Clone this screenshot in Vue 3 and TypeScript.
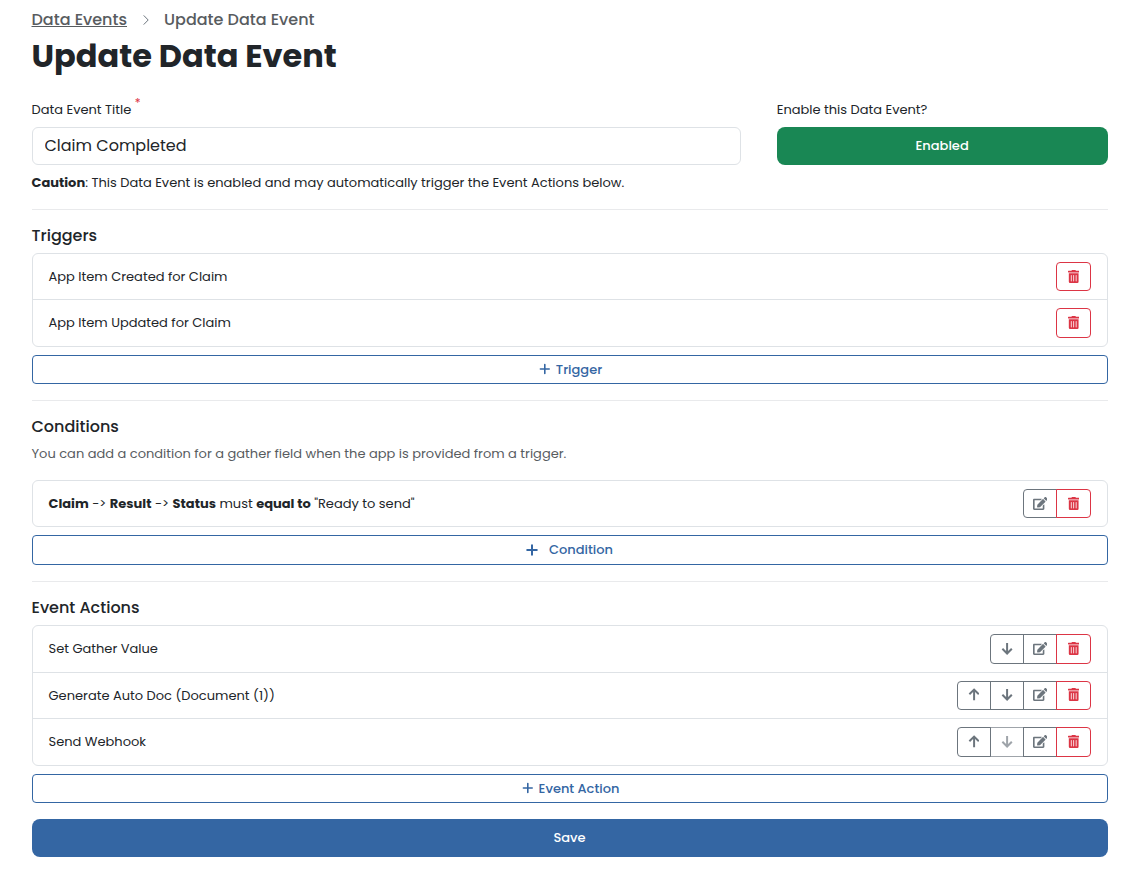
<script setup lang="ts">
import { ref } from 'vue'

type IconName = 'trash' | 'edit' | 'up' | 'down'

interface RowButton {
  icon: IconName
  label: string
  disabled?: boolean
}

interface Row {
  text: string
  buttons: RowButton[]
}

const title = ref('Claim Completed')

const up: RowButton = { icon: 'up', label: 'Move up' }
const down: RowButton = { icon: 'down', label: 'Move down' }
const edit: RowButton = { icon: 'edit', label: 'Edit' }
const trash: RowButton = { icon: 'trash', label: 'Delete' }

const icons: Record<IconName, { box: string; path: string }> = {
  trash: {
    box: '0 0 448 512',
    path: 'M32 464a48 48 0 0 0 48 48h288a48 48 0 0 0 48-48V128H32zm272-256a16 16 0 0 1 32 0v224a16 16 0 0 1-32 0zm-96 0a16 16 0 0 1 32 0v224a16 16 0 0 1-32 0zm-96 0a16 16 0 0 1 32 0v224a16 16 0 0 1-32 0zM432 32H312l-9.4-18.7A24 24 0 0 0 281.1 0H166.8a23.72 23.72 0 0 0-21.4 13.3L136 32H16A16 16 0 0 0 0 48v32a16 16 0 0 0 16 16h416a16 16 0 0 0 16-16V48a16 16 0 0 0-16-16z',
  },
  edit: {
    box: '0 0 576 512',
    path: 'M402.6 83.2l90.2 90.2c3.8 3.8 3.8 10 0 13.8L274.4 405.6l-92.8 10.3c-12.4 1.4-22.9-9.1-21.5-21.5l10.3-92.8L388.8 83.2c3.8-3.8 10-3.8 13.8 0zm162-22.9l-48.8-48.8c-15.2-15.2-39.9-15.2-55.2 0l-35.4 35.4c-3.8 3.8-3.8 10 0 13.8l90.2 90.2c3.8 3.8 10 3.8 13.8 0l35.4-35.4c15.2-15.3 15.2-40 0-55.2zM384 346.2V448H64V128h229.8c3.2 0 6.2-1.3 8.5-3.5l40-40c7.6-7.6 2.2-20.5-8.5-20.5H48C21.5 64 0 85.5 0 112v352c0 26.5 21.5 48 48 48h352c26.5 0 48-21.5 48-48V306.2c0-10.7-12.9-16-20.5-8.5l-40 40c-2.2 2.3-3.5 5.3-3.5 8.5z',
  },
  up: { box: '0 0 448 512', path: 'M240 480V64M54 248L240 62l186 186' },
  down: { box: '0 0 448 512', path: 'M240 36v414M54 268l186 186 186-186' },
}

const triggers: Row[] = [
  { text: 'App Item Created for Claim', buttons: [trash] },
  { text: 'App Item Updated for Claim', buttons: [trash] },
]

const conditionButtons: RowButton[] = [edit, trash]

const actions: Row[] = [
  { text: 'Set Gather Value', buttons: [down, edit, trash] },
  { text: 'Generate Auto Doc (Document (1))', buttons: [up, down, edit, trash] },
  { text: 'Send Webhook', buttons: [up, { ...down, disabled: true }, edit, trash] },
]
</script>

<template>
  <main class="page">
    <nav class="crumbs">
      <a href="#">Data Events</a>
      <svg class="chevron" viewBox="0 0 6 10"><path d="M.7.4L5.2 5 .7 9.6" /></svg>
      <span>Update Data Event</span>
    </nav>
    <h1>Update Data Event</h1>

    <div class="fields">
      <div>
        <label for="event-title">Data Event Title <sup>*</sup></label>
        <input id="event-title" v-model="title" type="text" />
      </div>
      <div>
        <label>Enable this Data Event?</label>
        <button class="solid success" type="button">Enabled</button>
      </div>
    </div>
    <p class="caution"><b>Caution</b>: This Data Event is enabled and may automatically trigger the Event Actions below.</p>

    <hr />

    <section>
      <h2>Triggers</h2>
      <ul class="list">
        <li v-for="row in triggers" :key="row.text">
          <span>{{ row.text }}</span>
          <div class="group">
            <button v-for="b in row.buttons" :key="b.icon" type="button" :class="['tool', b.icon]" :aria-label="b.label">
              <svg :viewBox="icons[b.icon].box"><path :d="icons[b.icon].path" /></svg>
            </button>
          </div>
        </li>
      </ul>
      <button class="add" type="button">
        <svg class="plus" viewBox="0 0 16 12"><path d="M7.8 1.6v8.8M3.4 6h8.8" /></svg>
        Trigger
      </button>
    </section>

    <hr />

    <section>
      <h2>Conditions</h2>
      <p class="hint">You can add a condition for a gather field when the app is provided from a trigger.</p>
      <ul class="list">
        <li>
          <span><b>Claim</b> -&gt; <b>Result</b> -&gt; <b>Status</b> must <b>equal to</b> "Ready to send"</span>
          <div class="group">
            <button v-for="b in conditionButtons" :key="b.icon" type="button" :class="['tool', b.icon]" :aria-label="b.label">
              <svg :viewBox="icons[b.icon].box"><path :d="icons[b.icon].path" /></svg>
            </button>
          </div>
        </li>
      </ul>
      <button class="add roomy" type="button">
        <svg class="plus" viewBox="0 0 12 12"><path d="M6 1.2v9.6M1.2 6h9.6" /></svg>
        Condition
      </button>
    </section>

    <hr />

    <section>
      <h2>Event Actions</h2>
      <ul class="list">
        <li v-for="row in actions" :key="row.text">
          <span>{{ row.text }}</span>
          <div class="group">
            <button
              v-for="b in row.buttons"
              :key="b.icon"
              type="button"
              :class="['tool', b.icon]"
              :aria-label="b.label"
              :disabled="b.disabled"
            >
              <svg :viewBox="icons[b.icon].box"><path :d="icons[b.icon].path" /></svg>
            </button>
          </div>
        </li>
      </ul>
      <button class="add" type="button">
        <svg class="plus" viewBox="0 0 16 12"><path d="M7.8 1.6v8.8M3.4 6h8.8" /></svg>
        Event Action
      </button>
    </section>

    <button class="solid save" type="button">Save</button>
  </main>
</template>

<style>
body {
  margin: 0;
  background: #fff;
}
</style>

<style scoped>
* {
  box-sizing: border-box;
}

.page {
  padding: 8px 28.5px 15px 31.5px;
  color: #212529;
  font: 400 13px/1.5 Poppins, Inter, sans-serif;
}

button,
input {
  margin: 0;
  font-family: inherit;
}

b {
  font-weight: 700;
}

.crumbs {
  display: flex;
  align-items: center;
  height: 24px;
  color: #585c5f;
  font-size: 16px;
  font-weight: 500;
  line-height: 24px;
}

.crumbs a {
  color: inherit;
  text-decoration: underline;
}

.chevron {
  width: 6px;
  height: 10px;
  margin: 0 15.5px;
  fill: none;
  stroke: #6c757d;
  stroke-width: 1;
}

h1 {
  margin: 5px 0 24.15px;
  font-size: 32px;
  font-weight: 700;
  line-height: 38.4px;
}

.fields {
  display: grid;
  grid-template-columns: 709px 330.75px;
  justify-content: space-between;
}

label {
  display: block;
  height: 19.5px;
  margin-bottom: 8px;
}

sup {
  color: #dc3545;
  font-size: 12px;
  line-height: 0;
  vertical-align: 7px;
}

input {
  display: block;
  width: 100%;
  height: 38px;
  padding: 5px 12px 7px;
  border: 1px solid #dee2e6;
  border-radius: 6px;
  background: #fff;
  color: #212529;
  font-size: 16px;
  line-height: 24px;
  outline: none;
}

.solid {
  display: block;
  width: 100%;
  height: 38px;
  padding: 0;
  border: 0;
  border-radius: 8px;
  color: #fff;
  font-size: 13px;
  font-weight: 500;
  line-height: 19.5px;
}

.success {
  background: #198754;
}

.save {
  height: 37.5px;
  margin-top: 16px;
  background: #3466a3;
}

.caution {
  margin: 8px 0 0;
}

hr {
  height: 1px;
  margin: 16px 0;
  border: 0;
  background: #e9eaec;
}

h2 {
  margin: 0 0 8px;
  font-size: 16px;
  font-weight: 500;
  line-height: 19.2px;
}

.hint {
  margin: 0 0 16px;
  color: #585c5f;
}

.list {
  margin: 0 0 8px;
  padding: 0;
  border: 1px solid #dee2e6;
  border-radius: 6px;
  list-style: none;
}

.list li {
  display: flex;
  align-items: center;
  justify-content: space-between;
  padding: 8px 16px;
}

.list li + li {
  border-top: 1px solid #dee2e6;
}

.group {
  display: flex;
}

.tool {
  position: relative;
  display: flex;
  align-items: center;
  justify-content: center;
  width: 34.25px;
  height: 29.5px;
  padding: 0 0 1px;
  border: 1px solid #6c757d;
  background: transparent;
  color: #6c757d;
}

.tool + .tool {
  margin-left: -1px;
}

.tool:first-child {
  border-top-left-radius: 4px;
  border-bottom-left-radius: 4px;
}

.tool:last-child {
  border-top-right-radius: 4px;
  border-bottom-right-radius: 4px;
}

.tool svg {
  height: 13px;
  fill: currentColor;
}

.tool.trash {
  border-color: #dc3545;
  color: #dc3545;
}

.tool.up svg,
.tool.down svg {
  fill: none;
  stroke: currentColor;
  stroke-width: 78;
}

.tool:disabled {
  opacity: 0.65;
}

.add {
  display: flex;
  align-items: center;
  justify-content: center;
  gap: 3px;
  width: 100%;
  height: 29.5px;
  padding: 0;
  border: 1px solid #3466a3;
  border-radius: 4px;
  background: transparent;
  color: #3466a3;
  font-size: 13px;
  font-weight: 500;
  line-height: 19.5px;
}

.add.roomy {
  gap: 11px;
}

.plus {
  height: 12px;
  margin-bottom: 1px;
  fill: none;
  stroke: currentColor;
  stroke-width: 1.6;
  stroke-linecap: round;
}

.roomy .plus {
  stroke-width: 2;
}
</style>
